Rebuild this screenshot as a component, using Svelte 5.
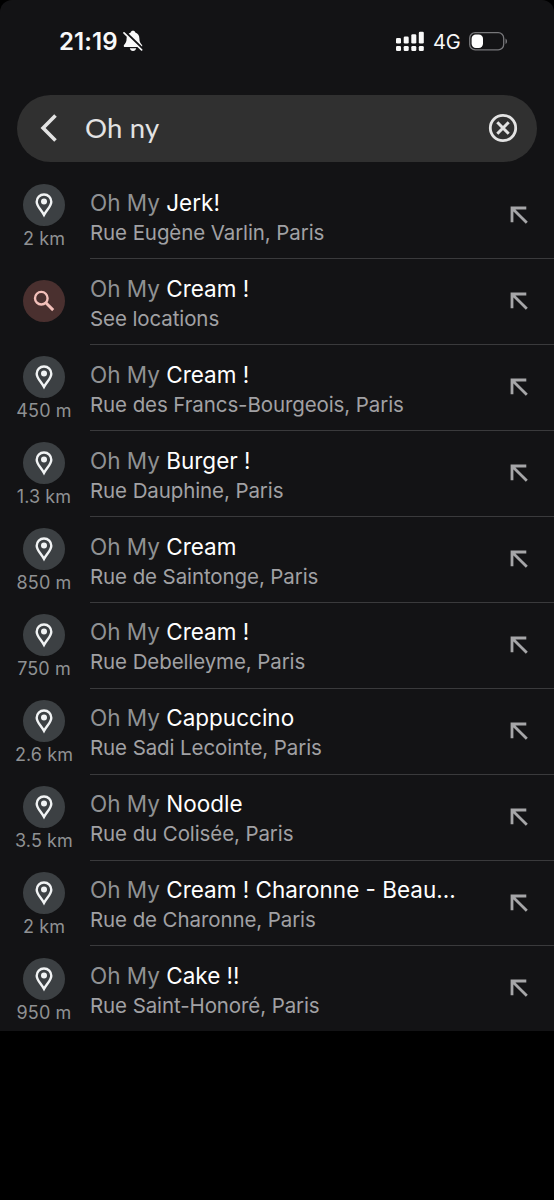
<script lang="ts">
  interface Suggestion {
    name: string;
    address: string;
    distance?: string;
  }

  const matched = "Oh My";
  let query = $state("Oh ny");

  const suggestions: Suggestion[] = [
    { name: "Jerk!", address: "Rue Eugène Varlin, Paris", distance: "2 km" },
    { name: "Cream !", address: "See locations" },
    { name: "Cream !", address: "Rue des Francs-Bourgeois, Paris", distance: "450 m" },
    { name: "Burger !", address: "Rue Dauphine, Paris", distance: "1.3 km" },
    { name: "Cream", address: "Rue de Saintonge, Paris", distance: "850 m" },
    { name: "Cream !", address: "Rue Debelleyme, Paris", distance: "750 m" },
    { name: "Cappuccino", address: "Rue Sadi Lecointe, Paris", distance: "2.6 km" },
    { name: "Noodle", address: "Rue du Colisée, Paris", distance: "3.5 km" },
    { name: "Cream ! Charonne - Beau...", address: "Rue de Charonne, Paris", distance: "2 km" },
    { name: "Cake !!", address: "Rue Saint-Honoré, Paris", distance: "950 m" },
  ];
</script>

<div class="screen">
  <main class="sheet">
    <header class="status">
      <span class="time">21:19</span>
      <svg class="bell" width="20" height="22" viewBox="0 0 20 22" aria-label="Silent mode">
        <path d="M10 .8c-1.300 0-2.100.7-2.300 1.600C4.900 3.300 3.600 5.600 3.600 8.600c0 3.400-1 4.700-2.400 6.100-.9.900-.5 2.400.9 2.400h15.800c1.400 0 1.800-1.500.9-2.400-1.400-1.400-2.400-2.700-2.400-6.100 0-3-1.300-5.300-4.100-6.200C12.100 1.500 11.300.8 10 .8zM6.800 18.300c.3 1.600 1.500 2.600 3.200 2.600s2.900-1 3.200-2.600z" fill="#f8f8f8" />
        <path d="M1.800 1.800l17.600 17" stroke="#131315" stroke-width="2.600" />
        <path d="M1 2.900l17.600 17" stroke="#f8f8f8" stroke-width="1.700" stroke-linecap="round" />
      </svg>
      <svg class="signal" width="28" height="20" viewBox="0 0 28 20" fill="#f8f8f8" aria-label="Signal">
        <rect x="0" y="7" width="5" height="5.5" rx="1.3" />
        <rect x="7.7" y="5.5" width="5" height="7" rx="1.3" />
        <rect x="15.3" y="3.3" width="5" height="9.2" rx="1.3" />
        <rect x="22.8" y=".7" width="5" height="11.8" rx="1.3" />
        <rect x="0" y="15" width="5" height="5" rx="1.3" />
        <rect x="7.7" y="15" width="5" height="5" rx="1.3" />
        <rect x="15.3" y="15" width="5" height="5" rx="1.3" />
        <rect x="22.8" y="15" width="5" height="5" rx="1.3" />
      </svg>
      <span class="network">4G</span>
      <svg class="battery" width="39" height="19" viewBox="0 0 39 19" aria-label="Battery">
        <rect x=".7" y=".7" width="34" height="17.2" rx="5.5" fill="none" stroke="#77777a" stroke-width="1.3" />
        <rect x="2.6" y="2.6" width="11.4" height="13.4" rx="4.2" fill="#fff" />
        <path d="M36.5 6.500c2 1 2 4.600 0 5.600z" fill="#77777a" />
      </svg>
    </header>

    <div class="search">
      <button class="icon-btn" type="button" aria-label="Back">
        <svg width="18" height="28" viewBox="0 0 18 28">
          <path d="M15.500 1.600L3.100 14l12.400 12.400" fill="none" stroke="#e3e3e3" stroke-width="3.6" />
        </svg>
      </button>
      <input class="query" type="text" bind:value={query} aria-label="Search here" />
      <button class="icon-btn" type="button" aria-label="Clear" onclick={() => (query = "")}>
        <svg width="30" height="30" viewBox="0 0 30 30" fill="none" stroke="#e3e3e3">
          <circle cx="15" cy="15" r="12.7" stroke-width="2.8" />
          <path d="M9.300 9.300l11.400 11.400M20.700 9.300l-11.400 11.400" stroke-width="3" />
        </svg>
      </button>
    </div>

    <ul class="list">
      {#each suggestions as item}
        <li class="row">
          <div class="lead" class:lead-search={!item.distance}>
            {#if item.distance}
              <span class="badge">
                <svg width="20" height="26" viewBox="0 0 20 26">
                  <path d="M10 2.500c-4.200 0-7.300 3.100-7.300 7.200 0 4.500 4.300 7.600 7.300 13.200 3-5.600 7.300-8.700 7.300-13.200 0-4.100-3.100-7.200-7.300-7.200z" fill="none" stroke="#f1f3f4" stroke-width="2.4" />
                  <circle cx="10" cy="9.5" r="3" fill="#f1f3f4" />
                </svg>
              </span>
              <span class="distance">{item.distance}</span>
            {:else}
              <span class="badge badge-search">
                <svg width="24" height="24" viewBox="0 0 24 24" fill="none" stroke="#f3c0ba">
                  <circle cx="9.3" cy="9.2" r="6.3" stroke-width="2.4" />
                  <path d="M13.600 13.500l7.600 7.600" stroke-width="2.900" />
                </svg>
              </span>
            {/if}
          </div>
          <div class="body">
            <div class="text">
              <div class="title"><span class="matched">{matched}</span> {item.name}</div>
              <div class="address">{item.address}</div>
            </div>
            <button class="icon-btn insert" type="button" aria-label={`Use ${matched} ${item.name}`}>
              <svg width="18" height="18" viewBox="0 0 18 18">
                <path d="M16.300 2H2v14.300M2.200 2.200l14.600 14.600" fill="none" stroke="#a6a6a8" stroke-width="2.8" />
              </svg>
            </button>
          </div>
        </li>
      {/each}
    </ul>
  </main>
</div>

<style>
  :global(body) { margin: 0; background: #000; }
  .screen { width: 554px; height: 1200px; background: #000; font-family: Inter, "Liberation Sans", sans-serif; overflow: hidden; }
  .sheet { height: 1031px; background: #131315; border-radius: 12px 12px 0 0; overflow: hidden; }
  .status { display: flex; align-items: center; height: 82px; padding: 0 46px 0 59px; box-sizing: border-box; color: #f8f8f8; }
  .time { width: 63px; margin-top: 1px; font-size: 24px; font-weight: 600; letter-spacing: 0.1px; white-space: nowrap; }
  .bell { margin-left: 1px; }
  .signal { margin-left: auto; margin-right: -1px; }
  .network { margin: 1px -1px 0 10px; width: 37px; font-size: 20px; letter-spacing: -0.2px; }
  .icon-btn { display: flex; align-items: center; justify-content: center; padding: 0; border: 0; background: transparent; cursor: pointer; }
  .search { display: flex; align-items: center; height: 67px; margin: 12.5px 17px 0; padding: 0 19px 0 23px; box-sizing: border-box; border-radius: 34px; background: #303030; }
  .query { flex: 1; min-width: 0; margin-left: 27px; padding: 0 0 2px; border: 0; outline: 0; background: transparent; color: #e3e3e3; font-family: Lato, sans-serif; font-size: 27.5px; letter-spacing: 0.2px; }
  .list { margin: 11.5px 0 0; padding: 0; list-style: none; }
  .row { display: flex; height: 85.94px; }
  .lead { flex: none; width: 90px; padding: 11.3px 2px 0 0; box-sizing: border-box; display: flex; flex-direction: column; align-items: center; }
  .lead-search { padding-top: 21.3px; }
  .badge { display: flex; align-items: center; justify-content: center; width: 42px; height: 42px; margin-right: 1px; border-radius: 50%; background: #3c4043; }
  .badge-search { background: #4a302f; }
  .distance { margin-top: 2px; font-size: 18px; line-height: 22px; letter-spacing: 0.1px; color: #8f9193; white-space: nowrap; }
  .body { flex: 1; min-width: 0; display: flex; box-sizing: border-box; border-bottom: 1px solid #3a3a3c; }
  .row:last-child .body { border-bottom: 0; }
  .text { flex: 1; min-width: 0; padding-top: 14.8px; white-space: nowrap; }
  .title { font-size: 22.5px; line-height: 29px; color: #fff; }
  .matched { color: #8f9193; }
  .address { margin-top: 1px; font-size: 20.5px; line-height: 30px; letter-spacing: -0.1px; color: #a1a1a4; }
  .insert { align-self: flex-start; margin: 33px 26px 0 0; }
</style>
